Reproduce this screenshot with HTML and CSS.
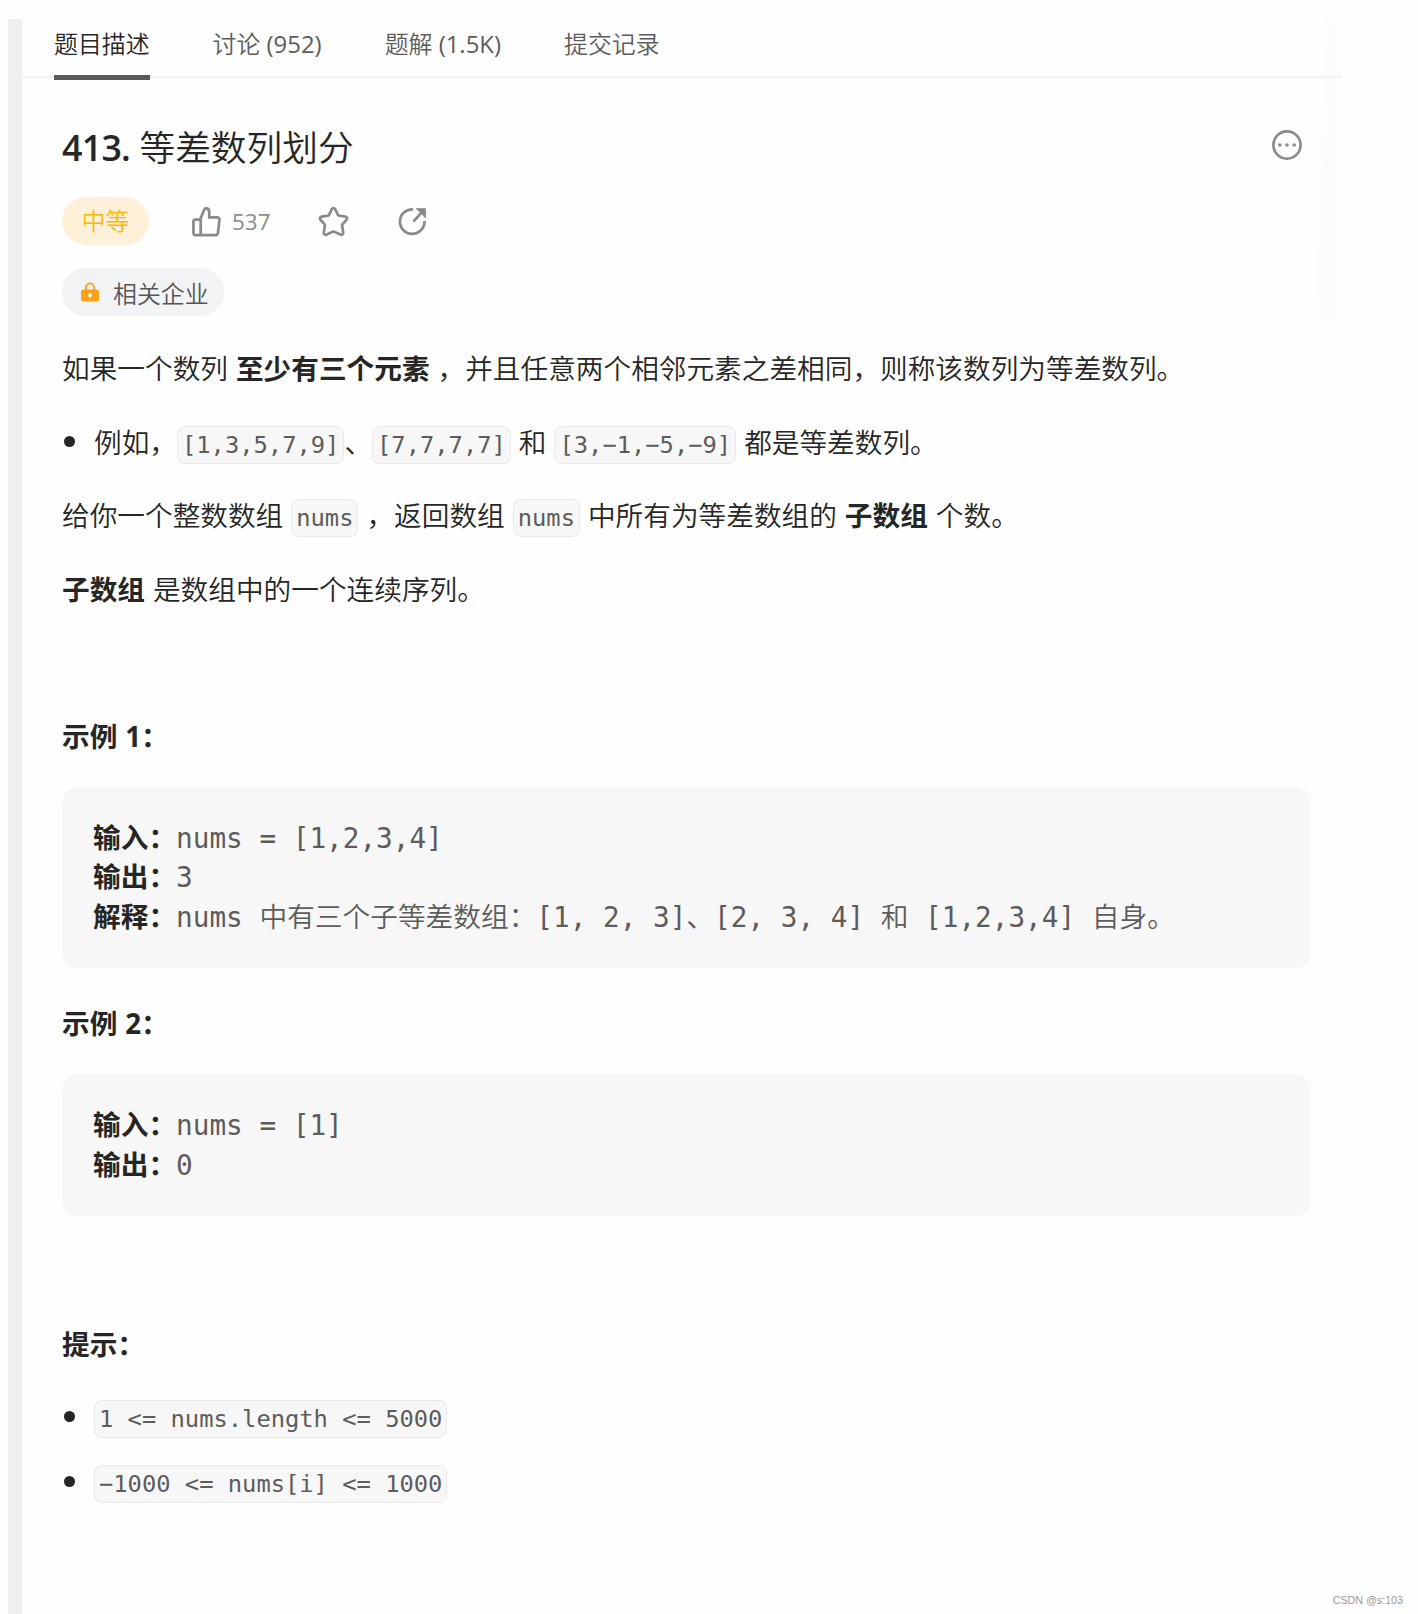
FILE: index.html
```html
<!DOCTYPE html>
<html lang="zh-CN">
<head>
  <meta charset="UTF-8">
  <meta name="viewport" content="width=device-width, initial-scale=1.0">
  <title>413. 等差数列划分</title>
  <link rel="stylesheet" href="styles.css">
</head>
<body>
  <div class="page">
    <div class="gutter"></div>
    <main class="panel">
      <nav class="tabs">
        <a class="tab active">题目描述</a>
        <a class="tab">讨论 <span class="count">(952)</span></a>
        <a class="tab">题解 <span class="count">(1.5K)</span></a>
        <a class="tab">提交记录</a>
      </nav>

      <div class="content">
        <header class="title-row">
          <h1><span class="number">413.</span> 等差数列划分</h1>
          <svg class="more" viewBox="0 0 30 30">
            <circle cx="15" cy="15" r="13.6" fill="none" stroke="#8a8a8a" stroke-width="2.6"/>
            <circle cx="7.8" cy="15" r="1.8"/>
            <circle cx="15" cy="15" r="1.8"/>
            <circle cx="22.2" cy="15" r="1.8"/>
          </svg>
        </header>

        <div class="meta">
          <span class="difficulty">中等</span>
          <span class="likes">
            <svg class="icon thumb" viewBox="0 0 30 32">
              <path d="M3.2 14H8.5L12.6 3.8C13 2.6 14 2.2 15.1 2.4C16.9 2.8 17.9 4.2 17.8 6V11.8H26C27.6 11.8 28.6 13 28.4 14.5L26.8 28C26.6 29.3 25.7 30 24.5 30H3.5C2.2 30 1.5 29.2 1.5 28V16C1.5 14.8 2.1 14 3.2 14ZM9 14V30"/>
            </svg>
            537
          </span>
          <svg class="icon star" viewBox="0 0 32 32">
            <path d="M14.3 3.2C15 1.9 17 1.9 17.7 3.2L20.9 9.8L28.2 10.9C30 11.2 30.6 13 29.4 14.2L24.8 19.4L26 27.3C26.3 29.2 24.7 30.2 23.1 29.4L16 26.2L8.9 29.4C7.3 30.2 5.7 29.2 6 27.3L7.2 19.4L2.6 14.2C1.4 13 2 11.2 3.8 10.9L11.1 9.8Z"/>
          </svg>
          <svg class="icon share" viewBox="0 0 30 30">
            <path d="M15.5 2.4A12.7 12.7 0 1 0 27.4 14.5M16 15L25 5"/>
            <path class="solid" d="M19 1.8H28.3V11.2L26 8.5L21.5 4Z"/>
          </svg>
        </div>

        <div class="company">
          <svg class="lock" viewBox="0 0 18 20">
            <path d="M4.9 9V5.5A4.1 4.1 0 0 1 13.1 5.5V9" fill="none" stroke="#ffa116" stroke-width="1.9"/>
            <rect x="0" y="7.5" width="18" height="12" rx="2.5" fill="#ffa116"/>
            <ellipse cx="9" cy="13.2" rx="1.7" ry="2.3" fill="#fff"/>
          </svg>
          相关企业
        </div>

        <div class="description">
          <p>如果一个数列 <strong>至少有三个元素</strong> ，并且任意两个相邻元素之差相同，则称该数列为等差数列。</p>
          <ul>
            <li>例如，<code>[1,3,5,7,9]</code>、<code>[7,7,7,7]</code> 和 <code>[3,−1,−5,−9]</code> 都是等差数列。</li>
          </ul>
          <p>给你一个整数数组 <code>nums</code> ，返回数组 <code>nums</code> 中所有为等差数组的 <strong>子数组</strong> 个数。</p>
          <p><strong>子数组</strong> 是数组中的一个连续序列。</p>
          <p>&nbsp;</p>

          <p class="label"><strong>示例 1：</strong></p>
<pre><strong>输入：</strong>nums = [1,2,3,4]
<strong>输出：</strong>3
<strong>解释：</strong>nums <span class="note">中有三个子等差数组：</span>[1, 2, 3]、[2, 3, 4] <span class="note">和</span> [1,2,3,4] <span class="note">自身。</span></pre>

          <p class="label"><strong>示例 2：</strong></p>
<pre><strong>输入：</strong>nums = [1]
<strong>输出：</strong>0</pre>

          <p class="spacer">&nbsp;</p>
          <p class="hint"><strong>提示：</strong></p>
          <ul class="limits">
            <li><code>1 &lt;= nums.length &lt;= 5000</code></li>
            <li><code>−1000 &lt;= nums[i] &lt;= 1000</code></li>
          </ul>
        </div>
      </div>
    </main>
  </div>
  <div class="watermark">CSDN @s:103</div>
</body>
</html>
```
FILE: styles.css
```css
* {
  box-sizing: border-box;
}
body {
  margin: 0;
  background-color: #fefefe;
  color: #262626;
  font-family: "Open Sans", "Noto Sans CJK SC", sans-serif;
  font-size: 27.67px;
  font-weight: 350;
}
.page {
  display: flex;
  height: 1614px;
  padding: 19px 0 0 8px;
  overflow: hidden;
}
.gutter {
  width: 14px;
  background-color: #efefef;
}
.panel {
  position: relative;
  width: 1320px;
}
/* Faint shadow at the right edge of the panel */
.panel::after {
  content: "";
  position: absolute;
  top: 0;
  right: 0;
  width: 28px;
  height: 306px;
  background-color: #fcfcfc;
  clip-path: polygon(45% 0, 100% 0, 100% 100%, 0 100%);
  z-index: -1;
}

/* Tabs */
.tabs {
  display: flex;
  gap: 63px;
  height: 59px;
  padding-left: 32px;
  border-bottom: 2px solid #f2f2f2;
}
.tab {
  height: 61px;
  color: #5c5c5c;
  font-size: 23.9px;
  line-height: 49px;
  white-space: nowrap;
}
.tab.active {
  color: #262626;
  border-bottom: 5px solid #595959;
}
.count {
  font-weight: 500;
}

.content {
  padding: 48px 32px 0 40px;
}
.title-row {
  display: flex;
  justify-content: space-between;
  height: 52px;
}
h1 {
  margin: 0;
  font-size: 35.7px;
  font-weight: 350;
  line-height: 42px;
}
.number {
  font-weight: 550;
  letter-spacing: -0.7px;
}
.more {
  width: 30px;
  height: 30px;
  margin: 4px 8px 0 0;
  fill: #8a8a8a;
}

/* Difficulty, likes and actions */
.meta {
  display: flex;
  align-items: center;
  height: 48px;
  margin-top: 19px;
}
.difficulty {
  width: 87px;
  height: 48px;
  border-radius: 24px;
  background-color: #fff1d9;
  color: #ffb800;
  font-size: 23.8px;
  line-height: 48px;
  text-align: center;
}
.likes {
  display: flex;
  align-items: center;
  gap: 11px;
  width: 78px;
  margin-left: 43px;
  color: #8c8c8c;
  font-size: 22.5px;
  font-weight: 400;
}
.icon {
  flex-shrink: 0;
  fill: none;
  stroke: #8a8a8a;
  stroke-width: 2.8;
  stroke-linejoin: round;
}
.thumb {
  width: 29px;
  height: 31px;
}
.star {
  width: 31px;
  height: 31px;
  margin-left: 48px;
}
.share {
  width: 29px;
  height: 29px;
  margin-left: 49px;
}
.solid {
  fill: #8a8a8a;
  stroke-width: 1;
}
.company {
  display: flex;
  align-items: center;
  gap: 14px;
  width: 162px;
  height: 48px;
  margin-top: 23px;
  padding-left: 19px;
  border-radius: 24px;
  background-color: #f1f3f5;
  color: #555;
  font-size: 23.9px;
  white-space: nowrap;
}
.lock {
  width: 18px;
  height: 20px;
}

/* Problem text */
.description {
  padding-top: 31px;
  line-height: 42px;
  word-spacing: 0.8px;
}
p,
ul {
  margin: 0 0 31.5px;
}
ul {
  padding: 0;
  list-style: none;
}
li {
  position: relative;
  padding-left: 32px;
}
li::before {
  content: "";
  position: absolute;
  left: 2px;
  top: 15px;
  width: 11px;
  height: 11px;
  border-radius: 50%;
  background-color: #262626;
}
code,
pre {
  font-family: "DejaVu Sans Mono", "Noto Sans CJK SC", monospace;
  color: #5c5c5c;
  font-weight: 400;
  word-spacing: 0;
}
code {
  padding: 4px;
  border: 1px solid #e9e9e9;
  border-radius: 8px;
  background-color: #f7f7f8;
  font-size: 23.77px;
  line-height: 1;
}
.label {
  margin-bottom: 30.5px;
}
pre {
  margin: 0 0 32.5px;
  padding: 32px 31px;
  border-radius: 16px;
  background-color: #f7f7f7;
  font-size: 27.7px;
  line-height: 39.4px;
}
.note {
  font-weight: 350;
}
strong {
  color: #262626;
  font-weight: 700;
}
.spacer {
  margin-bottom: 31px;
}
.hint {
  margin-bottom: 30px;
}
.limits li {
  height: 42px;
  margin-bottom: 23px;
}
.limits li::before {
  top: 16px;
}

.watermark {
  position: absolute;
  right: 15px;
  bottom: 8px;
  color: #999;
  font-family: "Liberation Sans", Arial, sans-serif;
  font-size: 10.7px;
}
```
